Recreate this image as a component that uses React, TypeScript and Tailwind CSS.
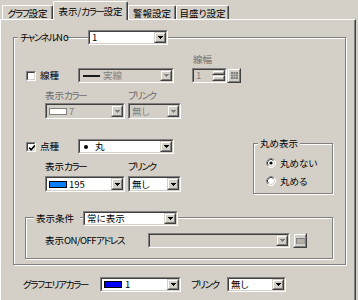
import React from "react";

const F =
  "font-['Noto_Sans_CJK_JP',sans-serif] [font-feature-settings:'palt'] text-[9.5px] leading-[11px]";

type P = { className?: string; children?: React.ReactNode };

function K({ children }: { children?: React.ReactNode }) {
  return <span className="tracking-[-1.3px]">{children}</span>;
}

function Sunken({ className = "", bg = "bg-white", children }: P & { bg?: string }) {
  return (
    <div
      className={
        "shrink-0 border border-t-[#808080] border-l-[#808080] border-b-white border-r-white " +
        className
      }
    >
      <div
        className={
          "h-full w-full border border-t-[#404040] border-l-[#404040] border-b-[#d4d0c8] border-r-[#d4d0c8] " +
          bg
        }
      >
        {children}
      </div>
    </div>
  );
}

function Raised({ className = "", children }: P) {
  return (
    <div
      className={
        "shrink-0 border border-t-[#d4d0c8] border-l-[#d4d0c8] border-b-[#404040] border-r-[#404040] bg-[#d4d0c8] " +
        className
      }
    >
      <div className="h-full w-full border border-t-white border-l-white border-b-[#808080] border-r-[#808080] flex items-center justify-center">
        {children}
      </div>
    </div>
  );
}

function Arrow({ disabled = false }: { disabled?: boolean }) {
  return (
    <svg width="5" height="3" viewBox="0 0 5 3" className="block">
      <path d="M0 0h5v1h-1v1h-1v1h-1v-1h-1v-1h-1z" fill={disabled ? "#808080" : "#000"} />
    </svg>
  );
}

function Combo({
  className = "",
  disabled = false,
  children,
}: P & { disabled?: boolean }) {
  return (
    <Sunken className={className} bg={disabled ? "bg-[#d4d0c8]" : "bg-white"}>
      <div className="flex h-full">
        <div
          className={
            "flex-1 flex items-center pl-[2px] whitespace-nowrap " +
            (disabled ? "text-[#808080]" : "text-black")
          }
        >
          {children}
        </div>
        <Raised className="w-[12px] h-full">
          <Arrow disabled={disabled} />
        </Raised>
      </div>
    </Sunken>
  );
}

function Checkbox({ checked = false, className = "" }: { checked?: boolean; className?: string }) {
  return (
    <Sunken className={"relative w-[10px] h-[10px] " + className}>
      {checked && (
        <svg width="10" height="10" viewBox="0 0 10 10" className="absolute left-0 top-0">
          <path d="M2.2 4.6 L4.2 6.8 L7.8 2.6" stroke="#000" strokeWidth="1.6" fill="none" />
        </svg>
      )}
    </Sunken>
  );
}

function Radio({ checked = false }: { checked?: boolean }) {
  return (
    <svg width="10" height="10" viewBox="0 0 10 10" className="block shrink-0">
      <circle cx="5" cy="5" r="4.5" fill="#fff" stroke="#fff" />
      <path d="M1.8 8.2 A4.5 4.5 0 0 1 8.2 1.8" stroke="#808080" fill="none" />
      <path d="M2.5 7.5 A3.5 3.5 0 0 1 7.5 2.5" stroke="#404040" fill="none" />
      <path d="M2.5 7.5 A3.5 3.5 0 0 0 7.5 2.5" stroke="#d4d0c8" fill="none" />
      {checked && <circle cx="5" cy="5" r="1.6" fill="#000" />}
    </svg>
  );
}

function Tab({ className = "", children }: P) {
  return (
    <div
      className={
        "h-[14px] border-t border-l border-r border-t-white border-l-white border-r-[#404040] shadow-[inset_-1px_0_0_#808080] rounded-t-[2px] flex justify-center pt-[2px] whitespace-nowrap " +
        className
      }
    >
      {children}
    </div>
  );
}

function Swatch({ color }: { color: "blue" | "sky" | "white" }) {
  const c =
    color === "blue"
      ? "bg-[#0000ff] border-[#000]"
      : color === "sky"
      ? "bg-[#0a80f8] border-[#000]"
      : "bg-white border-[#808080]";
  return <span className={"shrink-0 w-[18px] h-[7px] border " + c} />;
}

const GROUP =
  "relative border border-[#808080] shadow-[inset_1px_1px_0_#fff,1px_1px_0_#fff]";

const DIS = "text-[#6b6b6b]";

export default function App() {
  return (
    <div className={"w-[358px] h-[300px] bg-[#d4d0c8] overflow-hidden text-black " + F}>
      {/* tabs */}
      <div className="h-[19px] flex items-end">
        <Tab className="ml-[2px] w-[51px]">
          <K>グラフ</K>設定
        </Tab>
        <div className="relative z-10 w-[75px] h-[19px] -mb-px bg-[#d4d0c8] border-t border-l border-r border-t-white border-l-white border-r-[#404040] shadow-[inset_-1px_0_0_#808080] rounded-t-[2px] flex justify-center pt-[4px] whitespace-nowrap">
          表示/<K>カラー</K>設定
        </div>
        <Tab className="w-[48px]">警報設定</Tab>
        <Tab className="w-[53px]">目盛り設定</Tab>
      </div>

      {/* panel */}
      <div className="w-[356px] h-[281px] border-t border-l border-r border-t-white border-l-white border-r-[#404040] shadow-[inset_-1px_0_0_#808080]">
        {/* outer group */}
        <div className={GROUP + " ml-[12px] mt-[17px] w-[333px] h-[228px]"}>
          <div className="absolute left-[4px] top-[-8px] h-[15px] flex items-center">
            <div className="bg-[#d4d0c8] px-[2px] w-[48px] whitespace-nowrap">
              <K>チャンネル</K>No
            </div>
            <Combo className="ml-[22px] w-[80px] h-[15px]">1</Combo>
          </div>

          {/* 線幅 label */}
          <div className={"mt-[16px] h-[11px] pl-[179px] " + DIS}>線幅</div>

          {/* 線種 row */}
          <div className="mt-[3px] h-[15px] flex">
            <Checkbox className="ml-[12px] mt-[3px]" />
            <div className="ml-[4px] w-[38px] self-center">線種</div>
            <Combo className="w-[96px] h-[15px]" disabled>
              <span className="shrink-0 ml-[1px] w-[17px] h-[2px] bg-[#1a1a1a]" />
              <span className="ml-[3px]">実線</span>
            </Combo>
            <Sunken className="ml-[18px] w-[35px] h-[15px]" bg="bg-[#d4d0c8]">
              <div className="flex h-full">
                <div className="flex-1 pl-[2px] text-[#808080] flex items-center">1</div>
                <div className="flex flex-col">
                  <Raised className="w-[13px] h-[5px]" />
                  <Raised className="w-[13px] h-[6px]" />
                </div>
              </div>
            </Sunken>
            <Raised className="w-[14px] h-[15px]">
              <svg width="7" height="7" viewBox="0 0 7 7" className="block">
                <g fill="#808080">
                  <rect x="0" y="0" width="2" height="2" />
                  <rect x="2.5" y="0" width="2" height="2" />
                  <rect x="5" y="0" width="2" height="2" />
                  <rect x="0" y="2.5" width="2" height="2" />
                  <rect x="2.5" y="2.5" width="2" height="2" />
                  <rect x="5" y="2.5" width="2" height="2" />
                  <rect x="0" y="5" width="2" height="2" />
                  <rect x="2.5" y="5" width="2" height="2" />
                  <rect x="5" y="5" width="2" height="2" />
                </g>
              </svg>
            </Raised>
          </div>

          <div className={"mt-[7px] h-[11px] flex " + DIS}>
            <div className="ml-[31px] w-[83px]">
              表示<K>カラー</K>
            </div>
            <div>
              <K>ブリンク</K>
            </div>
          </div>

          <div className="mt-[2px] h-[16px] flex">
            <Combo className="ml-[31px] w-[80px] h-[16px]" disabled>
              <Swatch color="white" />
              <span className="ml-[2px]">7</span>
            </Combo>
            <Combo className="ml-[3px] w-[53px] h-[16px]" disabled>
              無し
            </Combo>
          </div>

          {/* 点種 section */}
          <div className="flex">
            <div className="w-[239px]">
              <div className="mt-[20px] h-[15px] flex">
                <Checkbox className="ml-[12px] mt-[3px]" checked />
                <div className="ml-[4px] w-[38px] self-center">点種</div>
                <Combo className="w-[96px] h-[15px]">
                  <span className="shrink-0 ml-[2px] w-[4px] h-[4px] rounded-full bg-black" />
                  <span className="ml-[7px]">丸</span>
                </Combo>
              </div>
              <div className="mt-[7px] h-[11px] flex">
                <div className="ml-[31px] w-[83px]">
                  表示<K>カラー</K>
                </div>
                <div>
                  <K>ブリンク</K>
                </div>
              </div>
              <div className="mt-[4px] h-[16px] flex">
                <Combo className="ml-[31px] w-[80px] h-[16px]">
                  <Swatch color="sky" />
                  <span className="ml-[2px]">195</span>
                </Combo>
                <Combo className="ml-[3px] w-[53px] h-[16px]">無し</Combo>
              </div>
            </div>

            <div className={GROUP + " mt-[24px] w-[80px] h-[51px]"}>
              <div className="absolute left-[4px] top-[-6px] bg-[#d4d0c8] px-[2px] whitespace-nowrap">
                丸め表示
              </div>
              <div className="mt-[14px] ml-[12px] h-[10px] flex items-center">
                <Radio checked />
                <span className="ml-[4px] whitespace-nowrap">丸めない</span>
              </div>
              <div className="mt-[8px] ml-[12px] h-[10px] flex items-center">
                <Radio />
                <span className="ml-[4px] whitespace-nowrap">丸める</span>
              </div>
            </div>
          </div>

          {/* 表示条件 group */}
          <div className={GROUP + " mt-[23px] ml-[11px] w-[308px] h-[42px]"}>
            <div className="absolute left-[8px] top-[-7px] h-[15px] flex items-center">
              <div className="bg-[#d4d0c8] px-[2px] w-[46px] whitespace-nowrap">表示条件</div>
              <Combo className="ml-[3px] w-[95px] h-[15px]">常に表示</Combo>
            </div>
            <div className="mt-[15px] h-[15px] flex items-center">
              <div className="ml-[19px] w-[103px] whitespace-nowrap">
                表示<span className="tracking-[-0.5px]">ON/OFF</span>
                <K>アドレス</K>
              </div>
              <Combo className="w-[142px] h-[15px]" disabled />
              <Raised className="ml-[3px] w-[14px] h-[15px]">
                <span className="w-[9px] h-[6px] border border-t-[#808080] border-l-[#808080] border-b-[#a0a0a0] border-r-[#a0a0a0] bg-[#b4b0a8]" />
              </Raised>
            </div>
          </div>
        </div>

        {/* bottom row */}
        <div className="mt-[12px] h-[15px] flex items-center">
          <div className="ml-[22px] w-[77px] whitespace-nowrap">
            <K>グラフエリアカラー</K>
          </div>
          <Combo className="w-[81px] h-[15px]">
            <Swatch color="blue" />
            <span className="ml-[3px]">1</span>
          </Combo>
          <div className="ml-[10px] w-[36px] whitespace-nowrap">
            <K>ブリンク</K>
          </div>
          <Combo className="w-[59px] h-[15px]">無し</Combo>
        </div>
      </div>
    </div>
  );
}
